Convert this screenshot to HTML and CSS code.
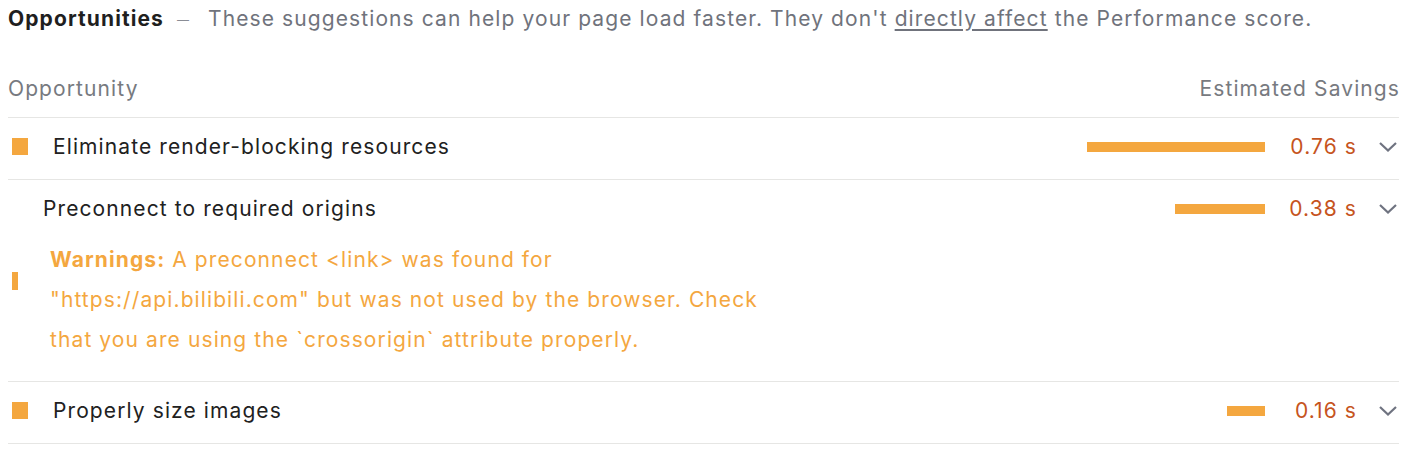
FILE: index.html
```html
<!DOCTYPE html>
<html>
<head>
<meta charset="utf-8">
<link rel="stylesheet" href="styles.css">
</head>
<body>
<div class="group">
  <div class="group-head">
    <span class="group-title">Opportunities</span><span class="dash">—</span><span class="group-desc">These suggestions can help your page load faster. They don't <a class="link" href="#">directly affect</a> the Performance score.</span>
  </div>
  <div class="table-head">
    <span class="th-left">Opportunity</span>
    <span class="th-right">Estimated Savings</span>
  </div>

  <div class="audit">
    <div class="audit-row">
      <span class="icon"></span>
      <span class="title">Eliminate render-blocking resources</span>
      <span class="sparkline"><span class="bar" style="width:178px"></span></span>
      <span class="value">0.76 s</span>
      <svg class="chevron" width="18" height="10" viewBox="0 0 18 10"><polyline points="1,1 9,8.5 17,1" fill="none" stroke="#6f7380" stroke-width="2.2"/></svg>
    </div>
  </div>

  <div class="audit">
    <div class="audit-row no-icon">
      <span class="title">Preconnect to required origins</span>
      <span class="sparkline"><span class="bar" style="width:90px"></span></span>
      <span class="value">0.38 s</span>
      <svg class="chevron" width="18" height="10" viewBox="0 0 18 10"><polyline points="1,1 9,8.5 17,1" fill="none" stroke="#6f7380" stroke-width="2.2"/></svg>
    </div>
    <div class="warnings">
      <span class="warn-mark"></span>
      <p class="warn-text"><strong>Warnings:</strong> A preconnect &lt;link&gt; was found for "https://api.bilibili.com" but was not used by the browser. Check that you are using the `crossorigin` attribute properly.</p>
    </div>
  </div>

  <div class="audit">
    <div class="audit-row">
      <span class="icon"></span>
      <span class="title">Properly size images</span>
      <span class="sparkline"><span class="bar" style="width:38px"></span></span>
      <span class="value">0.16 s</span>
      <svg class="chevron" width="18" height="10" viewBox="0 0 18 10"><polyline points="1,1 9,8.5 17,1" fill="none" stroke="#6f7380" stroke-width="2.2"/></svg>
    </div>
  </div>
</div>
</body>
</html>
```
FILE: styles.css
```css
html, body {
  background: #ffffff;
}
body {
  margin: 8px;
  font-family: Inter, "Liberation Sans", Arial, sans-serif;
  font-size: 21px;
  letter-spacing: 1.1px;
  color: #212121;
}
.group {
  width: 1391px;
}
.group-head {
  line-height: 22px;
  white-space: nowrap;
}
.group-title {
  font-weight: 700;
  color: #1f1f1f;
}
.dash {
  font-size: 12px;
  letter-spacing: 0;
  color: #8a8d95;
  margin: 0 19px 0 13px;
  position: relative;
  top: -2px;
}
.group-desc {
  color: #70737c;
}
.link {
  color: #70737c;
  text-decoration: underline;
  text-underline-offset: 3px;
}
.table-head {
  display: flex;
  justify-content: space-between;
  margin-top: 40px;
  line-height: 32px;
  padding-bottom: 12px;
  border-bottom: 1px solid #e6e6e4;
  color: #777a80;
}
.th-right {
  margin-right: -1px;
}
.audit {
  border-bottom: 1px solid #e6e6e4;
}
.audit-row {
  display: flex;
  align-items: center;
  height: 61px;
  box-sizing: border-box;
  padding-bottom: 4px;
}
.icon {
  width: 16px;
  height: 17px;
  background: #f4a73f;
  margin-left: 4px;
  margin-right: 25px;
  flex: none;
}
.no-icon {
  padding-left: 35px;
}
.title {
  flex: 1;
  color: #212121;
}
.sparkline {
  display: flex;
  justify-content: flex-end;
  width: 180px;
}
.bar {
  display: block;
  height: 10px;
  background: #f4a73f;
}
.value {
  width: 72px;
  margin-left: 20px;
  margin-right: -1px;
  text-align: right;
  color: #c6541d;
  white-space: nowrap;
}
.chevron {
  flex: none;
  margin-left: 23px;
  margin-right: 2px;
  margin-top: 1px;
}
.warnings {
  display: flex;
  align-items: flex-start;
  padding-bottom: 21px;
  margin-top: -1px;
}
.warn-mark {
  flex: none;
  width: 6px;
  height: 18px;
  background: #f4a73f;
  margin-left: 4px;
  margin-top: 32px;
}
.warn-text {
  margin: 0 0 0 32px;
  width: 740px;
  line-height: 40px;
  color: #f4a73f;
}
.warn-text strong {
  font-weight: 700;
}
```
